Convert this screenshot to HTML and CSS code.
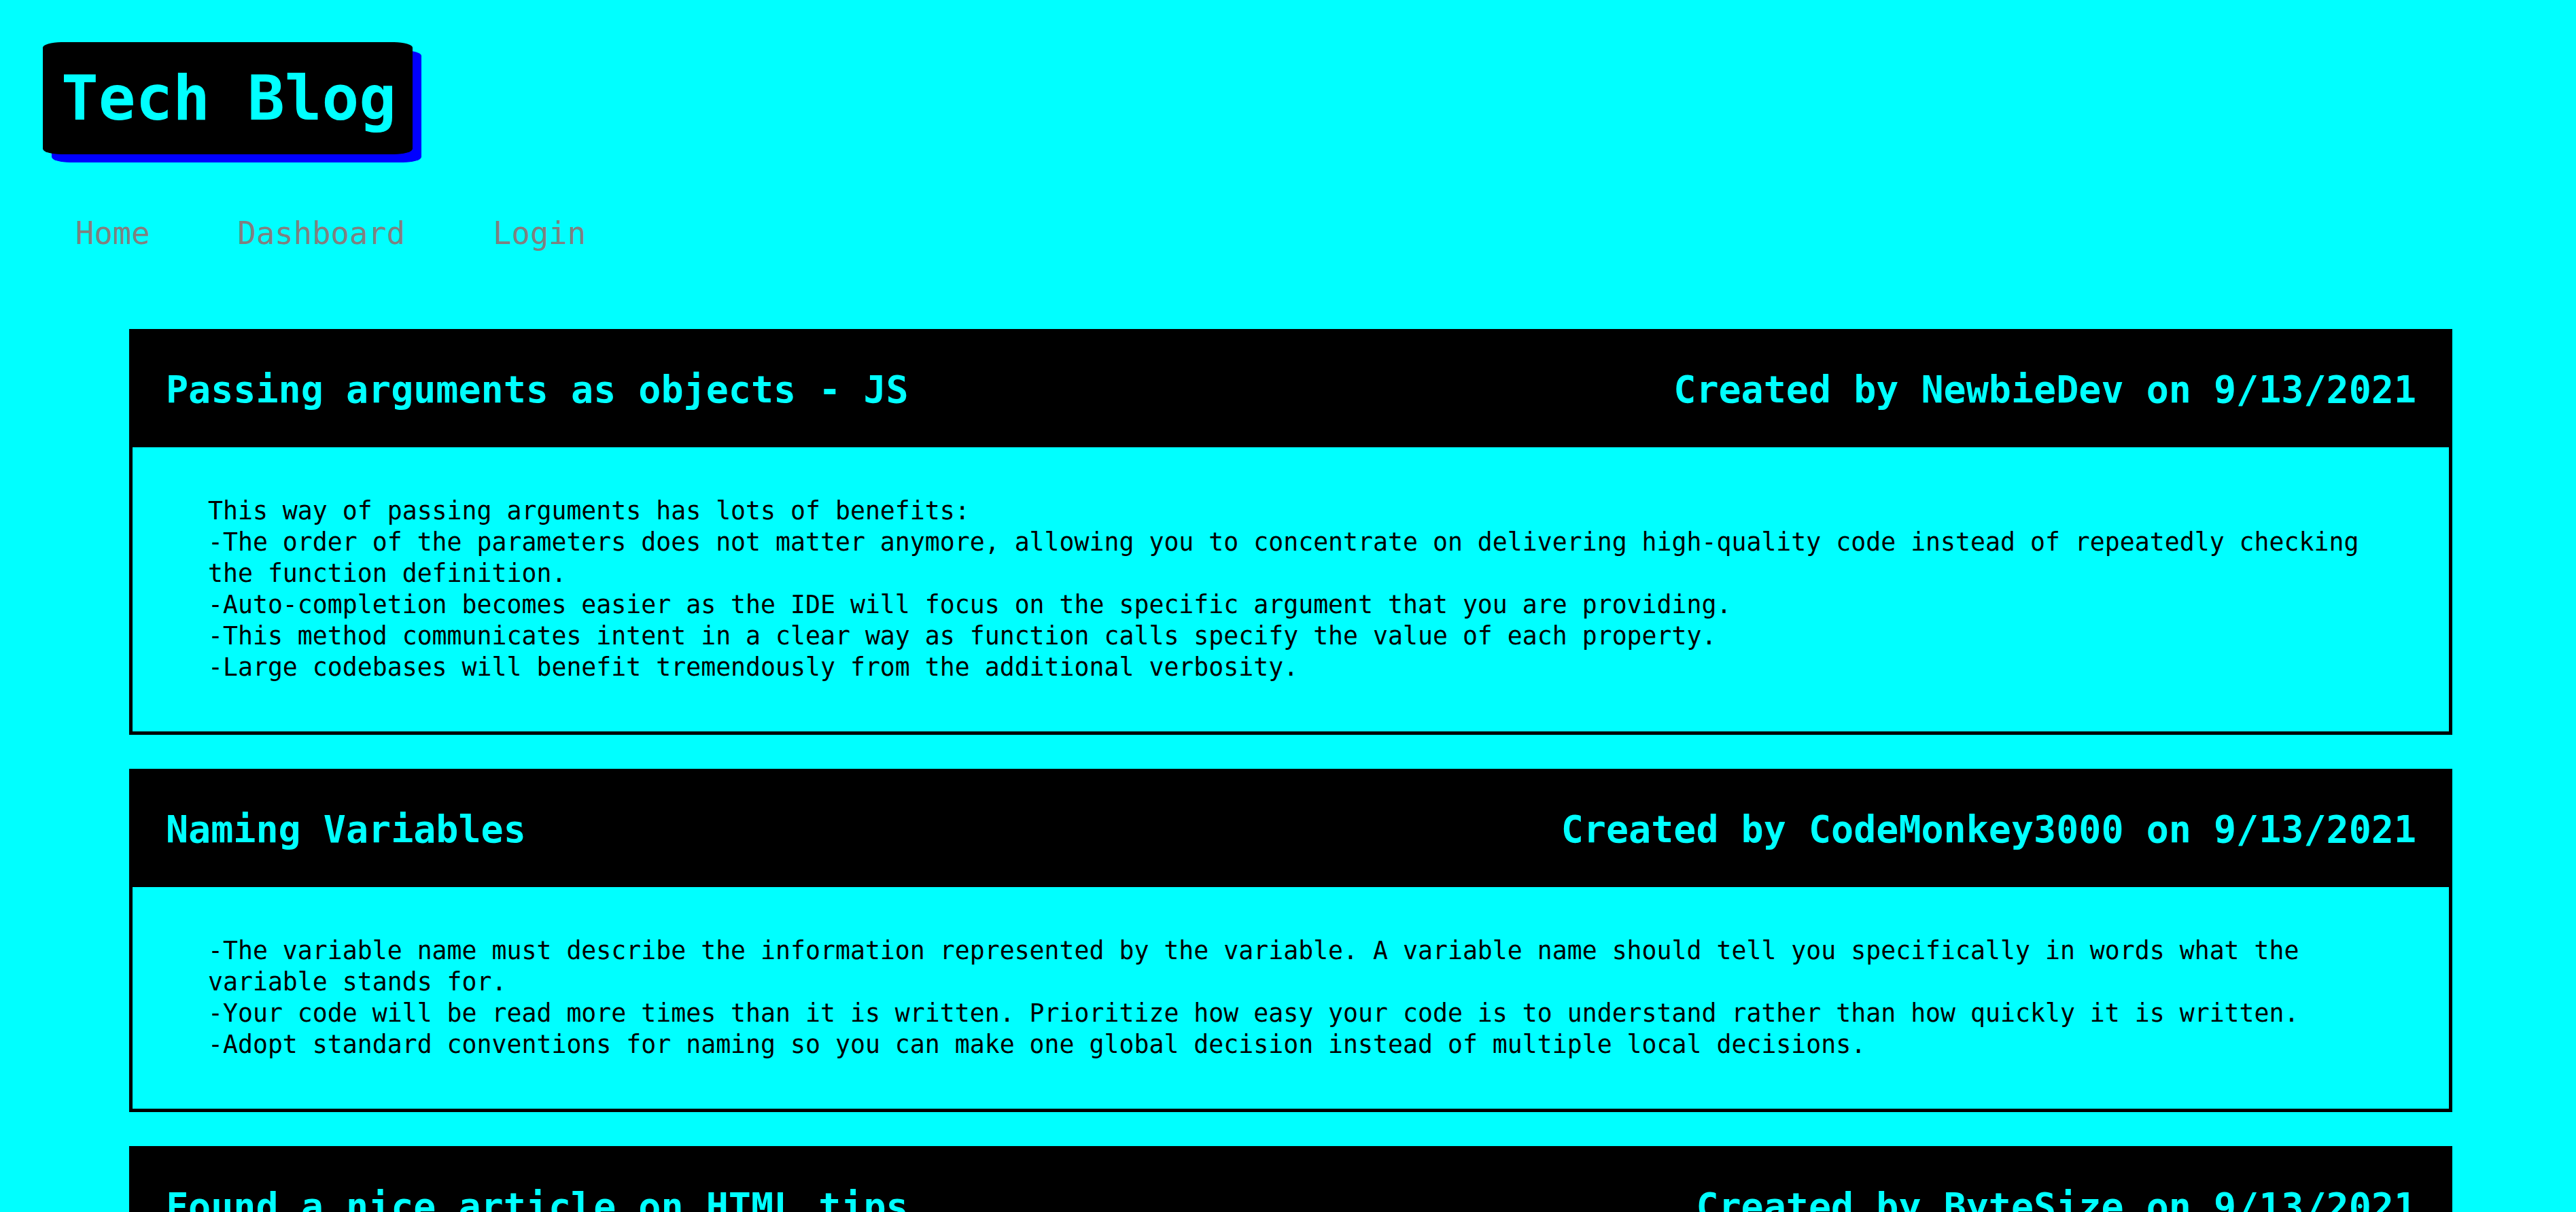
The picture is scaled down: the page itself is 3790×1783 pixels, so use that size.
FILE: index.html
```html
<!DOCTYPE html>
<html lang="en">
<head>
<meta charset="utf-8">
<title>Tech Blog</title>
<link rel="stylesheet" href="styles.css">
</head>
<body>
<header class="site-header">
  <h1 class="logo">Tech Blog</h1>
  <nav class="nav">
    <a class="nav-link" href="#">Home</a>
    <a class="nav-link" href="#">Dashboard</a>
    <a class="nav-link" href="#">Login</a>
  </nav>
</header>
<main class="posts">
  <article class="post">
    <div class="post-header">
      <h2 class="post-title">Passing arguments as objects - JS</h2>
      <span class="post-meta">Created by NewbieDev on 9/13/2021</span>
    </div>
    <div class="post-body">
      <p class="post-text">This way of passing arguments has lots of benefits:
-The order of the parameters does not matter anymore, allowing you to concentrate on delivering high-quality code instead of repeatedly checking the function definition.
-Auto-completion becomes easier as the IDE will focus on the specific argument that you are providing.
-This method communicates intent in a clear way as function calls specify the value of each property.
-Large codebases will benefit tremendously from the additional verbosity.</p>
    </div>
  </article>
  <article class="post">
    <div class="post-header">
      <h2 class="post-title">Naming Variables</h2>
      <span class="post-meta">Created by CodeMonkey3000 on 9/13/2021</span>
    </div>
    <div class="post-body">
      <p class="post-text">-The variable name must describe the information represented by the variable. A variable name should tell you specifically in words what the variable stands for.
-Your code will be read more times than it is written. Prioritize how easy your code is to understand rather than how quickly it is written.
-Adopt standard conventions for naming so you can make one global decision instead of multiple local decisions.</p>
    </div>
  </article>
  <article class="post">
    <div class="post-header">
      <h2 class="post-title">Found a nice article on HTML tips</h2>
      <span class="post-meta">Created by ByteSize on 9/13/2021</span>
    </div>
    <div class="post-body">
      <p class="post-text">Check out this article with a collection of useful HTML tips and tricks.</p>
    </div>
  </article>
</main>
</body>
</html>
```
FILE: styles.css
```css
html, body {
  margin: 0;
  padding: 0;
}

body {
  background: #00ffff;
  font-family: "DejaVu Sans Mono", monospace;
  color: #000;
}

.site-header {
  padding: 62px 0 0 63px;
}

.logo {
  display: inline-block;
  margin: 0;
  padding: 30px 24px 30px 27px;
  font-size: 91px;
  font-weight: bold;
  line-height: 105px;
  color: #00ffff;
  background: #000;
  border-radius: 5%;
  box-shadow: 13px 12px 0 #0000ff;
}

.nav {
  display: flex;
  gap: 129px;
  margin-top: 91px;
  padding-left: 48px;
}

.nav-link {
  font-size: 45.5px;
  line-height: 52px;
  color: #808080;
  text-decoration: none;
}

.posts {
  display: flex;
  flex-direction: column;
  gap: 50px;
  padding: 114px 182px 0 190px;
}

.post {
  border: 5px solid #000;
}

.post-header {
  display: flex;
  justify-content: space-between;
  align-items: center;
  background: #000;
  color: #00ffff;
  padding: 52px 48px 53px 49px;
  font-size: 55px;
  font-weight: bold;
  line-height: 64px;
}

.post-title {
  margin: 0;
  font-size: inherit;
  font-weight: inherit;
}

.post-body {
  padding: 71px 111px;
}

.post-text {
  margin: 0;
  white-space: pre-line;
  font-size: 36.5px;
  line-height: 46px;
}
```
